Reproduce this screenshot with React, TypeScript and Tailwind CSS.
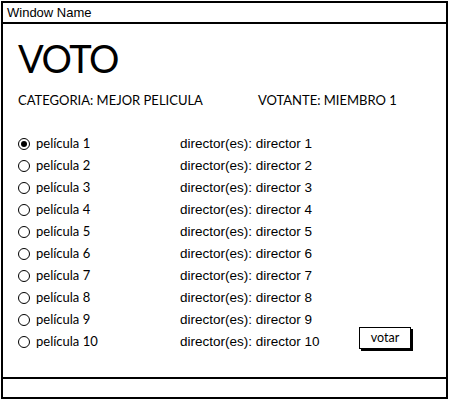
const films = Array.from({ length: 10 }, (_, i) => i + 1);

function Radio({ checked }: { checked: boolean }) {
  return (
    <span className="w-[12px] h-[12px] rounded-full border-[1.5px] border-black flex items-center justify-center shrink-0">
      {checked && <span className="w-[6px] h-[6px] rounded-full bg-black" />}
    </span>
  );
}

export default function App() {
  return (
    <div className="w-[450px] h-[400px] bg-white pt-[1px] pl-[1px]">
      <div className="w-[447px] h-[398px] border-2 border-black flex flex-col text-black font-['Lato',sans-serif]">
        <div className="h-[21px] border-b-2 border-black flex items-center pl-[4px] text-[13px] font-['Liberation_Sans',sans-serif]">
          Window Name
        </div>

        <div className="flex-1 flex flex-col pl-[15px] pr-[35px]">
          <h1 className="text-[38px] leading-none mt-[15px] tracking-[-1.5px]">VOTO</h1>

          <div className="flex text-[13px] mt-[16px] h-[16px] items-center">
            <span className="w-[240px]">CATEGORIA: MEJOR PELICULA</span>
            <span>VOTANTE: MIEMBRO 1</span>
          </div>

          <div className="flex mt-[24px] justify-between items-end">
            <div className="flex flex-col">
              {films.map((n) => (
                <div key={n} className="flex items-center h-[22px] text-[13px]">
                  <div className="w-[162px] flex items-center gap-[6px]">
                    <Radio checked={n === 1} />
                    <span>película {n}</span>
                  </div>
                  <span className="font-['Liberation_Sans',sans-serif] text-[13.5px]">director(es): director {n}</span>
                </div>
              ))}
            </div>
            <button className="w-[52px] h-[22px] border-[1.5px] border-black shadow-[2px_2px_0_#000] text-[12.5px] mb-[4px] flex items-center justify-center bg-white">
              votar
            </button>
          </div>
        </div>

        <div className="h-[20px] border-t-2 border-black" />
      </div>
    </div>
  );
}
